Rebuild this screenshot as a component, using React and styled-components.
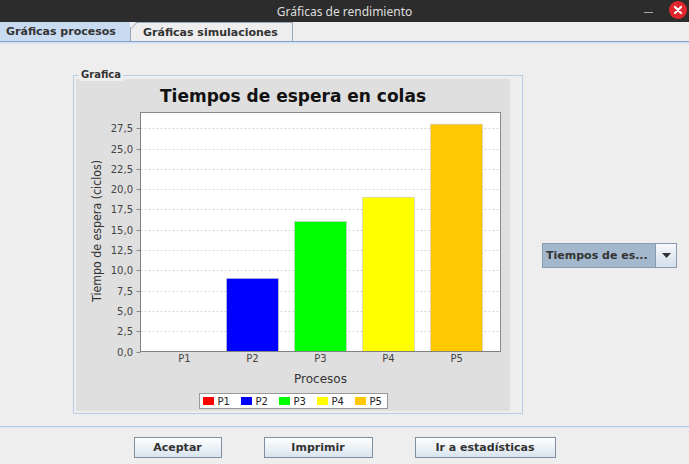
import React from "react";
import styled, { createGlobalStyle } from "styled-components";

const GlobalStyle = createGlobalStyle`
  html, body { margin: 0; padding: 0; background: #eeeeee; }
  body { font-family: "DejaVu Sans", "Liberation Sans", sans-serif; }
  * { box-sizing: border-box; }
`;

const Window = styled.div`
  width: 689px;
  height: 464px;
  display: flex;
  flex-direction: column;
  background: #eeeeee;
  overflow: hidden;
`;

const TitleBar = styled.div`
  height: 22px;
  flex: none;
  background: #2c2c2c;
  display: flex;
  align-items: center;
  justify-content: center;
  position: relative;
  color: #dedede;
  font-family: "Noto Sans", "DejaVu Sans", sans-serif;
  font-size: 12px;
`;

const WinControls = styled.div`
  position: absolute;
  right: 2px;
  top: 0;
  height: 22px;
  display: flex;
  align-items: center;
  gap: 16px;
`;

const MinBtn = styled.div`
  width: 9px;
  height: 1px;
  background: #a8a8a8;
  margin-top: 3px;
`;

const CloseBtn = styled.div`
  width: 18px;
  height: 18px;
  border-radius: 50%;
  background: #e0262c;
  display: flex;
  align-items: center;
  justify-content: center;
  margin-top: -3px;
`;

const TabStrip = styled.div`
  height: 20px;
  flex: none;
  display: flex;
  align-items: flex-end;
  border-bottom: 1px solid #7e9fc9;
  box-shadow: 0 2px 0 #d8e4f1;
`;

const Tab = styled.div`
  height: 19px;
  display: flex;
  align-items: center;
  font-size: 11px;
  font-weight: bold;
  color: #333333;
  padding: ${(p) => (p.$active ? "0 10px 0 6px" : "0 9px 0 12px")};
  width: ${(p) => p.$w}px;
  background: ${(p) => (p.$active ? "#c8dbf0" : "#eeeeee")};
  border: ${(p) => (p.$active ? "none" : "1px solid #9aa8b6")};
  border-bottom: none;
  ${(p) => (p.$active ? "" : "clip-path: polygon(6px 0, 100% 0, 100% 100%, 0 100%, 0 6px);")}
  position: relative;
`;

const TabSlant = styled.svg`
  position: absolute;
  left: -1px;
  top: -1px;
`;

const Content = styled.div`
  flex: 1;
  display: flex;
  align-items: flex-start;
  padding-top: 33px;
  padding-left: 73px;
`;

const Group = styled.div`
  position: relative;
  width: 450px;
  height: 339px;
  border: 1px solid #b7cde4;
  padding: 3px 12px 2px 2px;
`;

const GroupLabel = styled.span`
  position: absolute;
  top: -7px;
  left: 5px;
  padding: 0 2px;
  background: #eeeeee;
  font-size: 10px;
  font-weight: bold;
  color: #333333;
  line-height: 12px;
`;

const ChartPanel = styled.div`
  width: 100%;
  height: 100%;
  background: #dfdfdf;
  display: flex;
  flex-direction: column;
  align-items: center;
`;

const ChartTitle = styled.div`
  height: 33px;
  width: 100%;
  display: flex;
  align-items: center;
  justify-content: center;
  font-size: 17px;
  font-weight: bold;
  color: #111111;
  padding-top: 1px;
`;

const Legend = styled.div`
  margin-top: 5px;
  height: 16px;
  display: flex;
  align-items: center;
  gap: 12px;
  padding: 0 8px 0 3px;
  background: #ffffff;
  border: 1px solid #999999;
  font-size: 10px;
  color: #222222;
  width: 189px;
`;

const LegendItem = styled.div`
  display: flex;
  align-items: center;
  gap: 4px;
  width: 26px;
  flex: none;
`;

const Swatch = styled.span`
  width: 11px;
  height: 8px;
  background: ${(p) => p.$c};
  flex: none;
`;

const Combo = styled.div`
  margin-left: 19px;
  margin-top: 168px;
  width: 135px;
  height: 25px;
  display: flex;
  border: 1px solid #8a9bb0;
`;

const ComboText = styled.div`
  flex: 1;
  background: #a3b8cd;
  display: flex;
  align-items: center;
  padding-left: 3px;
  font-size: 11px;
  font-weight: bold;
  color: #333333;
`;

const ComboArrow = styled.div`
  width: 21px;
  border-left: 1px solid #8a9bb0;
  background: linear-gradient(#f6f9fc, #d3dfeb);
  display: flex;
  align-items: center;
  justify-content: center;
`;

const Footer = styled.div`
  height: 38px;
  flex: none;
  border-top: 1px solid #b7cde4;
  box-shadow: inset 0 1px 0 #dde8f3;
  display: flex;
  justify-content: center;
  align-items: flex-start;
  padding-top: 10px;
  gap: 42px;
`;

const Button = styled.button`
  width: ${(p) => p.$w}px;
  height: 21px;
  border: 1px solid #7f8fa0;
  background: linear-gradient(#ffffff, #d9e4ee);
  font-family: "DejaVu Sans", sans-serif;
  font-size: 11px;
  font-weight: bold;
  color: #333333;
  padding: 0;
  border-radius: 0;
`;

const data = [
  { name: "P1", v: 0, c: "#ff0000" },
  { name: "P2", v: 9, c: "#0000ff" },
  { name: "P3", v: 16, c: "#00ff00" },
  { name: "P4", v: 19, c: "#ffff00" },
  { name: "P5", v: 28, c: "#ffc800" },
];

function Plot() {
  const x0 = 64.5;
  const x1 = 424.5;
  const yBase = 239.5;
  const yTop = 0.5;
  const scale = 8.12;
  const w = x1 - x0;
  const lower = w * 0.05;
  const cat = w * 0.9;
  const barW = (cat * 0.8) / 5;
  const gap = (cat * 0.2) / 4;
  const ticks = [];
  for (let i = 0; i <= 11; i++) ticks.push(i * 2.5);
  return (
    <svg width="434" height="276" style={{ display: "block" }}>
      <rect x={x0} y={yTop} width={w} height={yBase - yTop} fill="#ffffff" />
      {ticks.map((t) => {
        const y = Math.round(yBase - t * scale) + 0.5;
        return (
          <g key={t}>
            {t > 0 && (
              <line x1={x0} x2={x1} y1={y} y2={y} stroke="#d4d4d4" strokeDasharray="2,2" />
            )}
            <line x1={x0 - 4} x2={x0} y1={y} y2={y} stroke="#888888" />
            <text
              x={57}
              y={y + 3.5}
              textAnchor="end"
              fontFamily="DejaVu Sans, sans-serif"
              fontSize="10"
              fill="#444444"
            >
              {t.toFixed(1).replace(".", ",")}
            </text>
          </g>
        );
      })}
      {data.map((d, i) => {
        const bx = x0 + lower + i * (barW + gap);
        const h = d.v * scale;
        return (
          <g key={d.name}>
            {h > 0 && (
              <rect
                x={bx}
                y={yBase - h}
                width={barW}
                height={h}
                fill={d.c}
                stroke="#c8c8c8"
                strokeWidth="0.6"
              />
            )}
            <text
              x={bx + barW / 2}
              y={250}
              textAnchor="middle"
              fontFamily="DejaVu Sans, sans-serif"
              fontSize="10"
              fill="#444444"
            >
              {d.name}
            </text>
          </g>
        );
      })}
      <rect x={x0} y={yTop} width={w} height={yBase - yTop} fill="none" stroke="#8a8a8a" />
      <line x1={x0} x2={x0} y1={yTop} y2={yBase} stroke="#808080" />
      <line x1={x0} x2={x1} y1={yBase} y2={yBase} stroke="#808080" />
      <text
        x={244.5}
        y={271}
        textAnchor="middle"
        fontFamily="DejaVu Sans, sans-serif"
        fontSize="12"
        fill="#333333"
      >
        Procesos
      </text>
      <text
        transform="translate(25 119) rotate(-90)"
        textAnchor="middle"
        fontFamily="DejaVu Sans, sans-serif"
        fontSize="12"
        fill="#333333"
        textLength="142"
        lengthAdjust="spacingAndGlyphs"
      >
        Tiempo de espera (ciclos)
      </text>
    </svg>
  );
}

export default function App() {
  return (
    <>
      <GlobalStyle />
      <Window>
        <TitleBar>
          Gráficas de rendimiento
          <WinControls>
            <MinBtn />
            <CloseBtn>
              <svg width="10" height="10" viewBox="0 0 10 10">
                <path d="M2 2 L8 8 M8 2 L2 8" stroke="#ffffff" strokeWidth="2.2" strokeLinecap="round" />
              </svg>
            </CloseBtn>
          </WinControls>
        </TitleBar>
        <TabStrip>
          <Tab $active $w={130}>Gráficas procesos</Tab>
          <Tab $w={163}>
            <TabSlant width="8" height="8">
              <line x1="0" y1="7.5" x2="7.5" y2="0" stroke="#9aa8b6" />
            </TabSlant>
            Gráficas simulaciones
          </Tab>
        </TabStrip>
        <Content>
          <Group>
            <GroupLabel>Grafica</GroupLabel>
            <ChartPanel>
              <ChartTitle>Tiempos de espera en colas</ChartTitle>
              <Plot />
              <Legend>
                {data.map((d) => (
                  <LegendItem key={d.name}>
                    <Swatch $c={d.c} />
                    {d.name}
                  </LegendItem>
                ))}
              </Legend>
            </ChartPanel>
          </Group>
          <Combo>
            <ComboText>Tiempos de es...</ComboText>
            <ComboArrow>
              <svg width="9" height="5" viewBox="0 0 9 5">
                <path d="M0 0 H9 L4.5 5 Z" fill="#333333" />
              </svg>
            </ComboArrow>
          </Combo>
        </Content>
        <Footer>
          <Button $w={88}>Aceptar</Button>
          <Button $w={109}>Imprimir</Button>
          <Button $w={141}>Ir a estadísticas</Button>
        </Footer>
      </Window>
    </>
  );
}
